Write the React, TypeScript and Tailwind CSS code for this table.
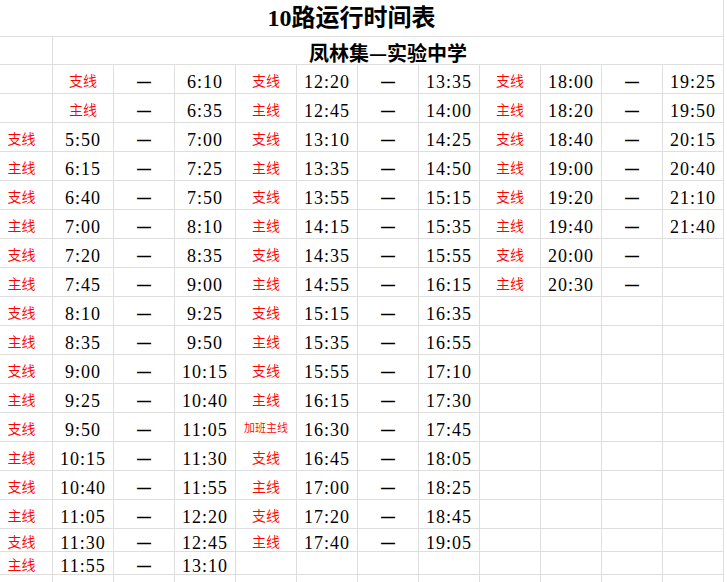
import React from "react";

// rows of the timetable: 12 cells each, "" = empty cell
const rows: string[][] = [
  ["", "支线", "—", "6:10", "支线", "12:20", "—", "13:35", "支线", "18:00", "—", "19:25"],
  ["", "主线", "—", "6:35", "主线", "12:45", "—", "14:00", "主线", "18:20", "—", "19:50"],
  ["支线", "5:50", "—", "7:00", "支线", "13:10", "—", "14:25", "支线", "18:40", "—", "20:15"],
  ["主线", "6:15", "—", "7:25", "主线", "13:35", "—", "14:50", "主线", "19:00", "—", "20:40"],
  ["支线", "6:40", "—", "7:50", "支线", "13:55", "—", "15:15", "支线", "19:20", "—", "21:10"],
  ["主线", "7:00", "—", "8:10", "主线", "14:15", "—", "15:35", "主线", "19:40", "—", "21:40"],
  ["支线", "7:20", "—", "8:35", "支线", "14:35", "—", "15:55", "支线", "20:00", "—", ""],
  ["主线", "7:45", "—", "9:00", "主线", "14:55", "—", "16:15", "主线", "20:30", "—", ""],
  ["支线", "8:10", "—", "9:25", "支线", "15:15", "—", "16:35", "", "", "", ""],
  ["主线", "8:35", "—", "9:50", "主线", "15:35", "—", "16:55", "", "", "", ""],
  ["支线", "9:00", "—", "10:15", "支线", "15:55", "—", "17:10", "", "", "", ""],
  ["主线", "9:25", "—", "10:40", "主线", "16:15", "—", "17:30", "", "", "", ""],
  ["支线", "9:50", "—", "11:05", "加班主线", "16:30", "—", "17:45", "", "", "", ""],
  ["主线", "10:15", "—", "11:30", "支线", "16:45", "—", "18:05", "", "", "", ""],
  ["支线", "10:40", "—", "11:55", "主线", "17:00", "—", "18:25", "", "", "", ""],
  ["主线", "11:05", "—", "12:20", "支线", "17:20", "—", "18:45", "", "", "", ""],
  ["支线", "11:30", "—", "12:45", "主线", "17:40", "—", "19:05", "", "", "", ""],
  ["主线", "11:55", "—", "13:10", "", "", "", "", "", "", "", ""],
  ["", "", "", "", "", "", "", "", "", "", "", ""],
];

const rowHeight = (i: number) => (i < 16 ? "h-[29px]" : i < 18 ? "h-[23px]" : "h-[29px]");

const Cell: React.FC<{ text: string; h: string; first: boolean }> = ({ text, h, first }) => {
  let content: React.ReactNode = null;
  if (text.includes("线")) {
    content = (
      <span
        className={`mb-[4px] font-[350] text-[#ff0000] font-['Noto_Sans_CJK_SC',sans-serif] ${
          text.length > 2 ? "text-[11px]" : "text-[14px]"
        }`}
      >
        {text}
      </span>
    );
  } else if (text.includes(":")) {
    content = (
      <span className="text-[18px] tracking-[1px] text-black font-['Liberation_Serif',serif]">
        {text}
      </span>
    );
  } else if (text) {
    content = (
      <span className="text-[14px] font-semibold text-black font-['Liberation_Sans',sans-serif]">
        {text}
      </span>
    );
  }
  return (
    <div
      className={`${h} ${
        first ? "pr-[9px]" : ""
      } border-r border-b border-[#dedede] flex items-center justify-center pt-[5px] leading-none whitespace-nowrap`}
    >
      {content}
    </div>
  );
};

const App: React.FC = () => {
  return (
    <div className="w-[727px] h-[582px] bg-white overflow-hidden">
      <div className="w-[724px] grid grid-cols-[53px_repeat(11,61px)]">
        {/* Title */}
        <div className="col-span-12 h-[37px] border-r border-b border-[#dedede] flex items-center justify-center pr-[20px]">
          <span className="text-[24px] font-bold text-black font-['Liberation_Serif','Noto_Sans_CJK_SC',serif]">
            10路运行时间表
          </span>
        </div>

        {/* Route */}
        <div className="h-[28px] border-r border-b border-[#dedede]" />
        <div className="col-span-11 h-[28px] border-r border-b border-[#dedede] flex items-center justify-center pt-[4px]">
          <span className="text-[20px] font-bold text-black leading-none font-['Noto_Sans_CJK_SC',serif]">
            凤林集—实验中学
          </span>
        </div>

        {/* Times */}
        {rows.map((row, i) =>
          row.map((text, j) => (
            <Cell key={`${i}-${j}`} text={text} h={rowHeight(i)} first={j === 0} />
          ))
        )}
      </div>
    </div>
  );
};

export default App;
